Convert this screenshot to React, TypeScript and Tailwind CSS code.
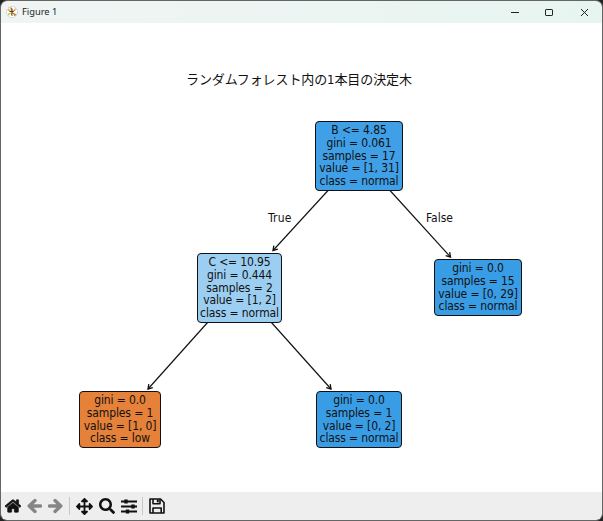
import { FaArrowsAlt, FaHome, FaSearch } from 'react-icons/fa';

const nodes = [
  {
    id: 'root',
    box: 'left-[315px] top-[98px] h-[70px] w-[88px] bg-[#3f9fe7]',
    lines: ['B <= 4.85', 'gini = 0.061', 'samples = 17', 'value = [1, 31]', 'class = normal'],
  },
  {
    id: 'left',
    box: 'left-[197px] top-[230px] h-[70px] w-[85px] bg-[#9ccef2]',
    lines: ['C <= 10.95', 'gini = 0.444', 'samples = 2', 'value = [1, 2]', 'class = normal'],
  },
  {
    id: 'right',
    box: 'left-[434px] top-[236px] h-[57px] w-[88px] bg-[#399de5]',
    lines: ['gini = 0.0', 'samples = 15', 'value = [0, 29]', 'class = normal'],
  },
  {
    id: 'left-low',
    box: 'left-[79px] top-[368px] h-[57px] w-[82px] bg-[#e58139]',
    lines: ['gini = 0.0', 'samples = 1', 'value = [1, 0]', 'class = low'],
  },
  {
    id: 'left-normal',
    box: 'left-[316px] top-[368px] h-[57px] w-[86px] bg-[#399de5]',
    lines: ['gini = 0.0', 'samples = 1', 'value = [0, 2]', 'class = normal'],
  },
];

const edges = [
  { x1: 328, y1: 167.5, x2: 273, y2: 227.5 },
  { x1: 390, y1: 167.5, x2: 450.5, y2: 234 },
  { x1: 208, y1: 299, x2: 148, y2: 366 },
  { x1: 271, y1: 299, x2: 331, y2: 366 },
];

function FigureIcon() {
  return (
    <svg className="size-3" viewBox="0 0 12 12">
      <circle cx="6" cy="6" r="5.5" fill="#fff" stroke="#b5bdba" strokeWidth="0.8" strokeDasharray="2 1" />
      <path d="M6 6 1.4 4.4 2.8 2.2Z" fill="#e8b23c" />
      <path d="M6.4 6 3.8 1.2 6.2 2Z" fill="#d2562c" />
      <path d="M6 6 9.6 1.8 9.4 4.8Z" fill="#e0a030" />
      <path d="M6 6 10.8 8.6 8.6 10.2Z" fill="#d9792b" />
      <path d="M6 6 2.8 9.8 1.6 7.8Z" fill="#e9b648" />
      <path d="M6 6 6.8 10 4.8 9.2Z" fill="#3e8a68" />
      <path d="M3.5 5.5h4.3M6 3.2v4.8" stroke="#4d4735" strokeWidth="1.1" />
    </svg>
  );
}

function BackIcon() {
  return (
    <svg className="h-4 w-[15px]" viewBox="0 0 15 16" fill="none" stroke="#858585" strokeWidth="3.4" strokeLinecap="round" strokeLinejoin="round">
      <path d="M8 2.6 2.2 8 8 13.4M2.5 8h11" />
    </svg>
  );
}

function ForwardIcon() {
  return (
    <svg className="h-4 w-[15px]" viewBox="0 0 15 16" fill="none" stroke="#858585" strokeWidth="3.4" strokeLinecap="round" strokeLinejoin="round">
      <path d="M7 2.6 12.8 8 7 13.4M12.5 8h-11" />
    </svg>
  );
}

function SlidersIcon() {
  return (
    <svg className="h-[15px] w-4" viewBox="0 0 16 15" fill="none" stroke="#111">
      <path d="M0 2.5h16M0 7.5h16M0 12.5h16" strokeWidth="1.8" />
      <path d="M5 .5v4M12 5.5v4M6.5 10.5v4" strokeWidth="3.4" />
    </svg>
  );
}

function SaveIcon() {
  return (
    <svg className="size-4" viewBox="0 0 16 16" fill="none" stroke="#111" strokeWidth="1.6" strokeLinejoin="round">
      <path d="M1 1h10.5L15 4.5V15H1Z" />
      <path d="M4 1v4.8h7V1M4 15v-5h8.2v5" />
      <path d="M8.8 1.5v2.8" strokeWidth="2" />
    </svg>
  );
}

function TitleBar() {
  return (
    <header className="flex h-[22px] shrink-0 items-center bg-linear-to-r from-[#f0f5f4] to-[#e7f5f1] pl-[5px] text-[#222]">
      <FigureIcon />
      <span className="ml-1 font-['Noto_Sans',sans-serif] text-[9.3px]">Figure 1</span>
      <svg className="mr-[13px] ml-auto h-[9px] w-[79px]" viewBox="0 0 79 9" fill="none" stroke="#222">
        <path d="M1 4.5h8" />
        <rect x="35.5" y="1.5" width="7" height="6" rx="0.6" />
        <path d="m71 1 7 7m0-7-7 7" />
      </svg>
    </header>
  );
}

function Toolbar() {
  return (
    <footer className="flex h-[28px] shrink-0 items-center bg-[#eee] pl-1 text-[#111]">
      <FaHome className="size-4" stroke="currentColor" strokeWidth="24" />
      <span className="ml-[6px]"><BackIcon /></span>
      <span className="ml-[6px]"><ForwardIcon /></span>
      <span className="ml-[6px] h-[18px] w-px bg-[#c8c8c8]" />
      <FaArrowsAlt className="ml-[6px] size-[17px]" />
      <FaSearch className="ml-[6px] size-4" />
      <span className="ml-[6px]"><SlidersIcon /></span>
      <span className="ml-[5px] h-[18px] w-px bg-[#c8c8c8]" />
      <span className="ml-[6px]"><SaveIcon /></span>
    </footer>
  );
}

export default function App() {
  return (
    <div className="h-[521px] w-[603px] bg-[#222]">
      <div className="flex h-full flex-col overflow-hidden rounded-[7px] border border-[#656565]">
        <TitleBar />
        <main className="relative -ml-px h-[469px] w-[602px] shrink-0 border-l border-[#656565] bg-white font-['DejaVu_Sans_Condensed','DejaVu_Sans',sans-serif] text-[#111] [font-stretch:condensed]">
          <div className="absolute inset-0 -ml-px">
            <h1 className="absolute top-[48px] left-[186px] font-['DejaVu_Sans_Condensed','Noto_Sans_CJK_JP',sans-serif] text-[13px] leading-[18px] tracking-[-0.1px] whitespace-nowrap">
              ランダムフォレスト内の1本目の決定木
            </h1>
            <svg className="absolute top-0 left-0 h-[469px] w-[602px]" viewBox="0 0 602 469">
              <defs>
                <marker id="arrow" markerWidth="8" markerHeight="8" refX="6" refY="4" orient="auto" markerUnits="userSpaceOnUse">
                  <path d="M1.8 1.3 6 4 1.8 6.7" fill="none" stroke="#111" strokeWidth="1.3" />
                </marker>
              </defs>
              {edges.map((edge) => (
                <line key={edge.x2} {...edge} stroke="#111" strokeWidth="1.15" markerEnd="url(#arrow)" />
              ))}
            </svg>
            <span className="absolute top-[187px] left-[268px] text-[12px] leading-4 tracking-[0.2px]">True</span>
            <span className="absolute top-[187px] left-[426px] text-[12px] leading-4">False</span>
            {nodes.map((node) => (
              <div
                key={node.id}
                className={`absolute flex flex-col items-center justify-center rounded-[4px] border border-[#111] text-[12px] leading-[12.7px] tracking-[-0.12px] whitespace-nowrap ${node.box}`}
              >
                {node.lines.map((line) => (
                  <span key={line}>{line}</span>
                ))}
              </div>
            ))}
          </div>
        </main>
        <Toolbar />
      </div>
    </div>
  );
}
